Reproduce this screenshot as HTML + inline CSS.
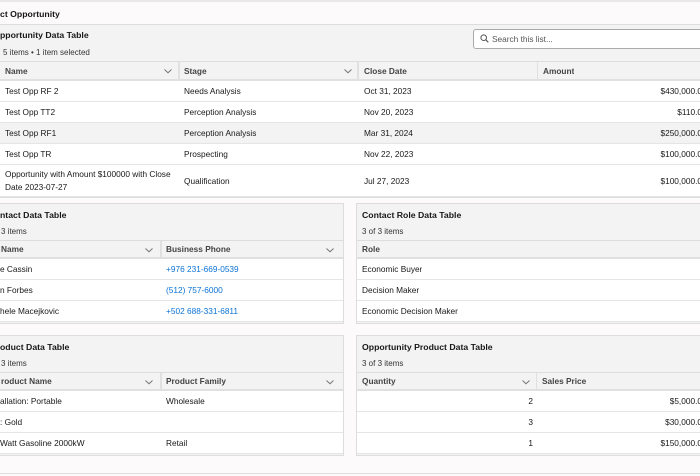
<!DOCTYPE html>
<html><head><meta charset="utf-8"><style>
*{box-sizing:border-box;margin:0;padding:0}
body{width:700px;height:476px;overflow:hidden;background:#fcfafa;font-family:"Liberation Sans",sans-serif;font-size:8.3px;color:#181818;position:relative}
.a{position:absolute}
.panel{position:absolute;background:#f3f3f3;border:1px solid #ddd}
.title{position:absolute;font-weight:bold;font-size:8.7px}
.sub{position:absolute;font-size:8px;color:#333}
.hdr{position:absolute;background:#f3f3f3;border-top:1px solid #ddd;border-bottom:2px solid #e0e0e0;height:20px;font-weight:bold;color:#444}
.row{position:absolute;background:#fff;border-bottom:1px solid #e5e5e5;height:21px}
.c{position:absolute;top:0;height:100%;display:flex;align-items:center;white-space:nowrap;overflow:hidden}
.sep{position:absolute;top:0;width:2px;height:100%;background:#e0e0e0}
.chev{position:absolute;top:5px;width:10px;height:8px}
.lnk{color:#0b72d4}
.r{justify-content:flex-end}
</style></head><body>
<div class="a" style="left:0;top:0;width:700px;height:2px;background:#e8e8e8"></div>
<div class="a" style="left:0;top:9px;font-weight:bold;font-size:8.7px">ct Opportunity</div>
<div class="a" style="left:0;top:24px;width:700px;height:1px;background:#ddd"></div>

<div class="a" style="left:0;top:25px;width:700px;height:173px;background:#f3f3f3;border-bottom:1px solid #ddd"></div>
<div class="title" style="left:0;top:30px">pportunity Data Table</div>
<div class="sub" style="left:3px;top:48px">5 items • 1 item selected</div>
<div class="a" style="left:473px;top:29px;width:240px;height:20px;background:#fff;border:1px solid #aaa;border-radius:3px"></div>
<svg class="a" style="left:480px;top:34px" width="9" height="9" viewBox="0 0 9 9"><circle cx="3.7" cy="3.7" r="2.8" fill="none" stroke="#555" stroke-width="1"/><path d="M5.8 5.8L8.3 8.3" stroke="#555" stroke-width="1.1"/></svg>
<div class="a" style="left:492px;top:34px;color:#555">Search this list...</div>

<div class="hdr" style="left:0;top:61px;width:700px">
 <div class="c" style="left:5px">Name</div>
 <svg class="chev" style="left:163px" viewBox="0 0 10 8"><path d="M1.5 2.5L5 5.8L8.5 2.5" fill="none" stroke="#777"/></svg>
 <div class="sep" style="left:178px"></div>
 <div class="c" style="left:184px">Stage</div>
 <svg class="chev" style="left:343px" viewBox="0 0 10 8"><path d="M1.5 2.5L5 5.8L8.5 2.5" fill="none" stroke="#777"/></svg>
 <div class="sep" style="left:357px"></div>
 <div class="c" style="left:364px">Close Date</div>
 <div class="sep" style="left:537px;width:1px"></div>
 <div class="c" style="left:543px">Amount</div>
</div>
<div class="row" style="left:0;top:81px;width:700px"><div class="c" style="left:5px">Test Opp RF 2</div><div class="c" style="left:184px">Needs Analysis</div><div class="c" style="left:364px">Oct 31, 2023</div><div class="c r" style="left:540px;width:162px">$430,000.0</div></div>
<div class="row" style="left:0;top:102px;width:700px"><div class="c" style="left:5px">Test Opp TT2</div><div class="c" style="left:184px">Perception Analysis</div><div class="c" style="left:364px">Nov 20, 2023</div><div class="c r" style="left:540px;width:162px">$110.0</div></div>
<div class="row" style="left:0;top:123px;width:700px;background:#f3f3f3"><div class="c" style="left:5px">Test Opp RF1</div><div class="c" style="left:184px">Perception Analysis</div><div class="c" style="left:364px">Mar 31, 2024</div><div class="c r" style="left:540px;width:162px">$250,000.0</div></div>
<div class="row" style="left:0;top:144px;width:700px"><div class="c" style="left:5px">Test Opp TR</div><div class="c" style="left:184px">Prospecting</div><div class="c" style="left:364px">Nov 22, 2023</div><div class="c r" style="left:540px;width:162px">$100,000.0</div></div>
<div class="row" style="left:0;top:165px;width:700px;height:32px"><div class="c" style="left:5px;line-height:13px;white-space:normal;width:175px">Opportunity with Amount $100000 with Close Date 2023-07-27</div><div class="c" style="left:184px">Qualification</div><div class="c" style="left:364px">Jul 27, 2023</div><div class="c r" style="left:540px;width:162px">$100,000.0</div></div>

<div class="panel" style="left:-2px;top:203px;width:346px;height:121px"></div>
<div class="title" style="left:0;top:210px">ntact Data Table</div>
<div class="sub" style="left:1px;top:227px">3 items</div>
<div class="hdr" style="left:0;top:240px;width:343px;height:19px">
 <div class="c" style="left:1px">Name</div>
 <svg class="chev" style="left:144px" viewBox="0 0 10 8"><path d="M1.5 2.5L5 5.8L8.5 2.5" fill="none" stroke="#777"/></svg>
 <div class="sep" style="left:160px"></div>
 <div class="c" style="left:166px">Business Phone</div>
 <svg class="chev" style="left:325px" viewBox="0 0 10 8"><path d="M1.5 2.5L5 5.8L8.5 2.5" fill="none" stroke="#777"/></svg>
</div>
<div class="row" style="left:0;top:259px;width:343px"><div class="c" style="left:0">e Cassin</div><div class="c lnk" style="left:166px">+976 231-669-0539</div></div>
<div class="row" style="left:0;top:280px;width:343px"><div class="c" style="left:0">n Forbes</div><div class="c lnk" style="left:166px">(512) 757-6000</div></div>
<div class="row" style="left:0;top:301px;width:343px"><div class="c" style="left:0">hele Macejkovic</div><div class="c lnk" style="left:166px">+502 688-331-6811</div></div>

<div class="panel" style="left:356px;top:203px;width:350px;height:121px"></div>
<div class="title" style="left:362px;top:210px">Contact Role Data Table</div>
<div class="sub" style="left:362px;top:227px">3 of 3 items</div>
<div class="hdr" style="left:357px;top:240px;width:343px;height:19px"><div class="c" style="left:5px">Role</div></div>
<div class="row" style="left:357px;top:259px;width:343px"><div class="c" style="left:5px">Economic Buyer</div></div>
<div class="row" style="left:357px;top:280px;width:343px"><div class="c" style="left:5px">Decision Maker</div></div>
<div class="row" style="left:357px;top:301px;width:343px"><div class="c" style="left:5px">Economic Decision Maker</div></div>

<div class="panel" style="left:-2px;top:335px;width:346px;height:121px"></div>
<div class="title" style="left:0;top:342px">oduct Data Table</div>
<div class="sub" style="left:1px;top:359px">3 items</div>
<div class="hdr" style="left:0;top:372px;width:343px;height:19px">
 <div class="c" style="left:1px">roduct Name</div>
 <svg class="chev" style="left:144px" viewBox="0 0 10 8"><path d="M1.5 2.5L5 5.8L8.5 2.5" fill="none" stroke="#777"/></svg>
 <div class="sep" style="left:160px"></div>
 <div class="c" style="left:166px">Product Family</div>
 <svg class="chev" style="left:325px" viewBox="0 0 10 8"><path d="M1.5 2.5L5 5.8L8.5 2.5" fill="none" stroke="#777"/></svg>
</div>
<div class="row" style="left:0;top:391px;width:343px"><div class="c" style="left:0">allation: Portable</div><div class="c" style="left:166px">Wholesale</div></div>
<div class="row" style="left:0;top:412px;width:343px"><div class="c" style="left:0">: Gold</div></div>
<div class="row" style="left:0;top:433px;width:343px"><div class="c" style="left:0">Watt Gasoline 2000kW</div><div class="c" style="left:166px">Retail</div></div>

<div class="panel" style="left:356px;top:335px;width:350px;height:121px"></div>
<div class="title" style="left:362px;top:342px">Opportunity Product Data Table</div>
<div class="sub" style="left:362px;top:359px">3 of 3 items</div>
<div class="hdr" style="left:357px;top:372px;width:343px;height:19px">
 <div class="c" style="left:5px">Quantity</div>
 <svg class="chev" style="left:164px" viewBox="0 0 10 8"><path d="M1.5 2.5L5 5.8L8.5 2.5" fill="none" stroke="#777"/></svg>
 <div class="sep" style="left:179px;width:1px"></div>
 <div class="c" style="left:185px">Sales Price</div>
</div>
<div class="row" style="left:357px;top:391px;width:343px"><div class="c r" style="left:0;width:176px">2</div><div class="c r" style="left:180px;width:165px">$5,000.0</div></div>
<div class="row" style="left:357px;top:412px;width:343px"><div class="c r" style="left:0;width:176px">3</div><div class="c r" style="left:180px;width:165px">$30,000.0</div></div>
<div class="row" style="left:357px;top:433px;width:343px"><div class="c r" style="left:0;width:176px">1</div><div class="c r" style="left:180px;width:165px">$150,000.0</div></div>

<div class="a" style="left:0;top:473px;width:700px;height:1px;background:#ddd"></div>
</body></html>
